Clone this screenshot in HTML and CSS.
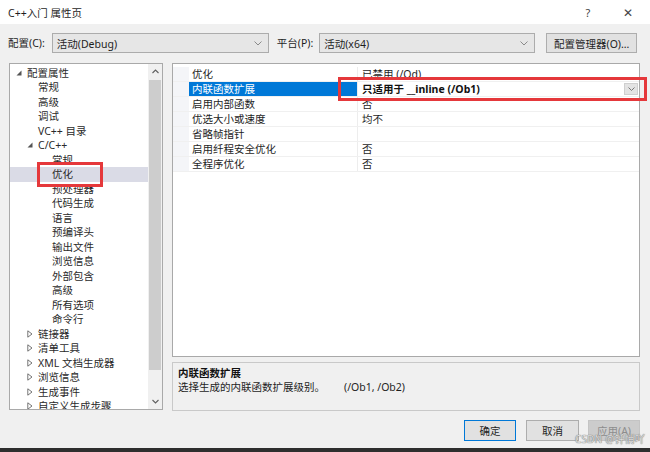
FILE: index.html
```html
<!DOCTYPE html>
<html lang="zh">
<head>
<meta charset="utf-8">
<title>C++入门 属性页</title>
<link rel="stylesheet" href="styles.css">
</head>
<body>
<div class="win">
  <div class="titlebar">
    <span class="title">C++入门 属性页</span>
    <span class="tb-btns"><span class="help">?</span><span class="close">✕</span></span>
  </div>
  <div class="config">
    <span class="lbl">配置(C):</span>
    <div class="combo cfg"><span>活动(Debug)</span><svg class="chev" width="8" height="5" viewBox="0 0 8 5"><path d="M0.5 0.5 L4 4 L7.5 0.5" fill="none" stroke="#8a8a8a" stroke-width="1"/></svg></div>
    <span class="lbl plat-lbl">平台(P):</span>
    <div class="combo plat"><span>活动(x64)</span><svg class="chev" width="8" height="5" viewBox="0 0 8 5"><path d="M0.5 0.5 L4 4 L7.5 0.5" fill="none" stroke="#8a8a8a" stroke-width="1"/></svg></div>
    <div class="btn mgr">配置管理器(O)...</div>
  </div>
  <div class="main">
    <div class="tree">
      <div class="tree-list">
        <div class="row l0"><span class="tog"><svg width="6" height="6" viewBox="0 0 6 6"><polygon points="5.5,0.5 5.5,5.5 0.5,5.5" fill="#555"/></svg></span><span>配置属性</span></div>
        <div class="row l1"><span class="tog"></span><span>常规</span></div>
        <div class="row l1"><span class="tog"></span><span>高级</span></div>
        <div class="row l1"><span class="tog"></span><span>调试</span></div>
        <div class="row l1"><span class="tog"></span><span>VC++ 目录</span></div>
        <div class="row l1"><span class="tog"><svg width="6" height="6" viewBox="0 0 6 6"><polygon points="5.5,0.5 5.5,5.5 0.5,5.5" fill="#555"/></svg></span><span>C/C++</span></div>
        <div class="row l2"><span class="tog"></span><span>常规</span></div>
        <div class="row l2 sel"><span class="tog"></span><span>优化</span></div>
        <div class="row l2"><span class="tog"></span><span>预处理器</span></div>
        <div class="row l2"><span class="tog"></span><span>代码生成</span></div>
        <div class="row l2"><span class="tog"></span><span>语言</span></div>
        <div class="row l2"><span class="tog"></span><span>预编译头</span></div>
        <div class="row l2"><span class="tog"></span><span>输出文件</span></div>
        <div class="row l2"><span class="tog"></span><span>浏览信息</span></div>
        <div class="row l2"><span class="tog"></span><span>外部包含</span></div>
        <div class="row l2"><span class="tog"></span><span>高级</span></div>
        <div class="row l2"><span class="tog"></span><span>所有选项</span></div>
        <div class="row l2"><span class="tog"></span><span>命令行</span></div>
        <div class="row l1"><span class="tog"><svg width="6" height="8" viewBox="0 0 6 8"><polygon points="0.8,0.8 5,4 0.8,7.2" fill="none" stroke="#666" stroke-width="0.9"/></svg></span><span>链接器</span></div>
        <div class="row l1"><span class="tog"><svg width="6" height="8" viewBox="0 0 6 8"><polygon points="0.8,0.8 5,4 0.8,7.2" fill="none" stroke="#666" stroke-width="0.9"/></svg></span><span>清单工具</span></div>
        <div class="row l1"><span class="tog"><svg width="6" height="8" viewBox="0 0 6 8"><polygon points="0.8,0.8 5,4 0.8,7.2" fill="none" stroke="#666" stroke-width="0.9"/></svg></span><span>XML 文档生成器</span></div>
        <div class="row l1"><span class="tog"><svg width="6" height="8" viewBox="0 0 6 8"><polygon points="0.8,0.8 5,4 0.8,7.2" fill="none" stroke="#666" stroke-width="0.9"/></svg></span><span>浏览信息</span></div>
        <div class="row l1"><span class="tog"><svg width="6" height="8" viewBox="0 0 6 8"><polygon points="0.8,0.8 5,4 0.8,7.2" fill="none" stroke="#666" stroke-width="0.9"/></svg></span><span>生成事件</span></div>
        <div class="row l1"><span class="tog"><svg width="6" height="8" viewBox="0 0 6 8"><polygon points="0.8,0.8 5,4 0.8,7.2" fill="none" stroke="#666" stroke-width="0.9"/></svg></span><span>自定义生成步骤</span></div>
      </div>
      <div class="vscroll">
        <div class="sarrow"><svg width="7" height="5" viewBox="0 0 7 5"><path d="M0.5 4 L3.5 1 L6.5 4" fill="none" stroke="#606060" stroke-width="1.1"/></svg></div>
        <div class="track"><div class="thumb"></div></div>
        <div class="sarrow"><svg width="7" height="5" viewBox="0 0 7 5"><path d="M0.5 1 L3.5 4 L6.5 1" fill="none" stroke="#606060" stroke-width="1.1"/></svg></div>
      </div>
      <div class="mark mark-tree"></div>
    </div>
    <div class="right">
      <div class="grid">
        <div class="prow"><span class="gut"></span><span class="pname">优化</span><span class="pval">已禁用 (/Od)</span></div>
        <div class="prow"><span class="gut"></span><span class="pname psel">内联函数扩展</span><span class="pval pedit"><b>只适用于 __inline (/Ob1)</b><span class="ddbtn"><svg width="7" height="4" viewBox="0 0 7 4"><path d="M0.5 0.5 L3.5 3.5 L6.5 0.5" fill="none" stroke="#777" stroke-width="1"/></svg></span></span></div>
        <div class="prow"><span class="gut"></span><span class="pname">启用内部函数</span><span class="pval">否</span></div>
        <div class="prow"><span class="gut"></span><span class="pname">优选大小或速度</span><span class="pval">均不</span></div>
        <div class="prow"><span class="gut"></span><span class="pname">省略帧指针</span><span class="pval"></span></div>
        <div class="prow"><span class="gut"></span><span class="pname">启用纤程安全优化</span><span class="pval">否</span></div>
        <div class="prow"><span class="gut"></span><span class="pname">全程序优化</span><span class="pval">否</span></div>
        <div class="mark mark-grid"></div>
      </div>
      <div class="desc">
        <div class="desc-title">内联函数扩展</div>
        <div class="desc-text"><span>选择生成的内联函数扩展级别。</span><span class="desc-sw">(/Ob1, /Ob2)</span></div>
      </div>
    </div>
  </div>
  <div class="footer">
    <div class="btn ok">确定</div>
    <div class="btn cancel">取消</div>
    <div class="btn apply">应用(A)</div>
    <span class="wm">CSDN @钎悄吖</span>
  </div>
  <div class="strip"></div>
</div>
</body>
</html>
```
FILE: styles.css
```css
* { box-sizing: border-box; }
html, body { margin: 0; padding: 0; }
body {
  font-family: "Noto Sans", "Noto Sans CJK SC", sans-serif;
  font-size: 10.5px;
  color: #1e1e1e;
  background: #f0f0f0;
}
.win {
  width: 650px;
  height: 452px;
  display: flex;
  flex-direction: column;
  background: #f0f0f0;
  overflow: hidden;
}
.titlebar {
  height: 24px;
  background: #ffffff;
  display: flex;
  align-items: center;
  justify-content: space-between;
  padding: 0 0 0 8px;
  font-size: 10.5px;
}
.tb-btns { display: flex; align-items: center; }
.help { width: 36px; text-align: center; color: #444; font-size: 11px; }
.close { width: 44px; text-align: center; color: #444; font-size: 12px; }
.config {
  height: 39px;
  display: flex;
  align-items: flex-start;
  padding: 9px 0 0 8px;
}
.lbl { line-height: 20px; }
.combo {
  height: 20px;
  background: #e6e6e6;
  border: 1px solid #acacac;
  display: flex;
  align-items: center;
  justify-content: space-between;
  padding: 0 4px 0 4px;
}
.cfg { margin-left: 7px; width: 217px; }
.plat-lbl { margin-left: 8px; }
.plat { margin-left: 6px; width: 216px; }
.chev { margin-right: 2px; }
.btn {
  height: 21px;
  background: #e1e1e1;
  border: 1px solid #adadad;
  display: flex;
  align-items: center;
  justify-content: center;
}
.mgr { margin-left: 11px; width: 91px; height: 20px; }
.main {
  height: 348px;
  display: flex;
  padding-left: 9px;
}
.tree {
  position: relative;
  width: 154px;
  height: 347px;
  background: #ffffff;
  border: 1px solid #a9a9a9;
  display: flex;
}
.tree-list {
  flex: 1;
  padding-top: 1.5px;
  overflow: hidden;
}
.row {
  height: 14.5px;
  line-height: 14.5px;
  display: flex;
  align-items: center;
  white-space: nowrap;
  color: #2a2a2a;
}
.tog { width: 11px; flex: none; display: flex; align-items: center; }
.l0 { padding-left: 6px; }
.l1 { padding-left: 17px; }
.l2 { padding-left: 31px; }
.sel { background: #dadbe6; }
.vscroll {
  width: 14px;
  background: #f0f0f0;
  display: flex;
  flex-direction: column;
}
.sarrow {
  height: 15px;
  display: flex;
  align-items: center;
  justify-content: center;
}
.track { flex: 1; padding: 1px 1px; }
.thumb { height: 290px; background: #cdcdcd; }
.mark {
  position: absolute;
  border: 3px solid #e5383b;
}
.mark-tree { left: 27px; top: 98px; width: 66px; height: 25px; }
.right {
  margin-left: 9px;
  width: 468px;
  display: flex;
  flex-direction: column;
}
.grid {
  position: relative;
  height: 294px;
  background: #ffffff;
  border: 1px solid #a9a9a9;
  padding-top: 2.5px;
}
.prow {
  height: 15px;
  display: flex;
  border-bottom: 1px solid #f0f0f0;
  line-height: 14px;
}
.gut { width: 16px; background: #f4f5f8; flex: none; }
.pname { width: 168px; padding-left: 3px; flex: none; white-space: nowrap; }
.psel { background: #0078d7; color: #ffffff; }
.pval {
  flex: 1;
  border-left: 1px solid #ededed;
  padding-left: 4px;
  white-space: nowrap;
  display: flex;
  align-items: center;
}
.pedit { justify-content: space-between; padding-right: 1px; }
.pedit b { font-weight: 700; color: #111; }
.ddbtn {
  width: 14px;
  height: 12px;
  background: #e3e3e3;
  border: 1px solid #cfcfcf;
  display: flex;
  align-items: center;
  justify-content: center;
}
.mark-grid { left: 165px; top: 13px; width: 309px; height: 24px; border-width: 3.5px; }
.desc {
  margin-top: 5px;
  height: 49px;
  border: 1px solid #c9c9c9;
  background: #f0f0f0;
  padding: 3px 5px;
  line-height: 14px;
}
.desc-title { font-weight: 700; color: #111; }
.desc-sw { margin-left: 19px; }
.footer {
  position: relative;
  flex: 1;
  display: flex;
  justify-content: flex-end;
  align-items: flex-start;
  padding: 9px 10px 0 0;
}
.ok { width: 52px; border-color: #0078d7; }
.cancel { width: 53px; margin-left: 10px; }
.apply { width: 52px; margin-left: 9px; background: #cccccc; border-color: #c4c4c4; color: #8d8d8d; }
.wm {
  position: absolute;
  right: 5px;
  top: 22px;
  font-size: 10px;
  line-height: 12px;
  color: #dcdcdc;
  text-shadow: 0 0 1px #7a7a7a, 0 0 1px #7a7a7a;
  letter-spacing: 0.2px;
}
.strip { height: 4px; background: #2e2e2e; flex: none; }
```
